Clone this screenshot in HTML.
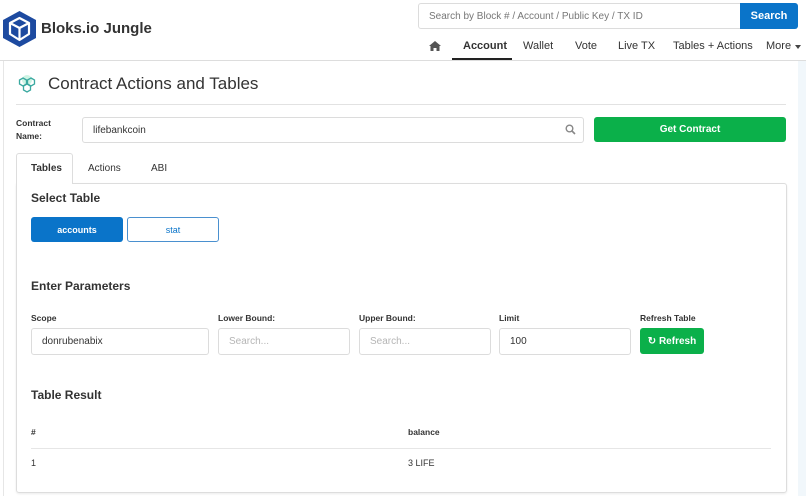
<!DOCTYPE html>
<html><head><meta charset="utf-8"><style>
*{box-sizing:border-box;margin:0;padding:0}
body{width:806px;height:496px;overflow:hidden;background:#fff;font-family:"Liberation Sans",sans-serif;color:#333;position:relative}
.a{position:absolute;white-space:nowrap}
.b{font-weight:bold}
.inp{position:absolute;border:1px solid #dcdcdc;border-radius:3px;background:#fff;font-size:10px;padding-left:10px;display:flex;align-items:center}
.ph{color:#b5b5b5}
.lbl{position:absolute;font-size:8.5px;font-weight:bold;color:#333}
.h{position:absolute;font-size:12px;font-weight:bold;color:#333}
.nav{position:absolute;top:40px;font-size:11px;color:#333}
</style></head><body>
<svg class="a" style="left:3px;top:11px" width="33" height="36" viewBox="0 0 33 36">
<polygon points="16.5,0 33,9 33,27 16.5,36 0,27 0,9" fill="#1d4aa0"/>
<g fill="none" stroke="#fff" stroke-width="2.2" stroke-linejoin="round">
<polygon points="16.5,7 26,12 16.5,17 7,12"/>
<polyline points="7,12 7,23 16.5,29 26,23 26,12"/>
<line x1="16.5" y1="17" x2="16.5" y2="29"/>
</g></svg>
<div class="a b" style="left:41px;top:20px;font-size:15px;color:#333">Bloks.io Jungle</div>
<div class="inp" style="left:418px;top:3px;width:324px;height:26px;border-radius:3px 0 0 3px;font-size:10px"><span style="color:#777">Search by Block # / Account / Public Key / TX ID</span></div>
<div class="a b" style="left:740px;top:3px;width:58px;height:26px;background:#0a74c9;color:#fff;font-size:11px;display:flex;align-items:center;justify-content:center;border-radius:0 3px 3px 0">Search</div>
<svg class="a" style="left:429px;top:41px" width="12" height="10" viewBox="0 0 12 10"><path d="M6 0 L12 5 L10.5 5 L10.5 10 L7.5 10 L7.5 7 L4.5 7 L4.5 10 L1.5 10 L1.5 5 L0 5 Z" fill="#555"/></svg>
<div class="nav b" style="left:463px">Account</div>
<div class="a" style="left:452px;top:58px;width:60px;height:2px;background:#222"></div>
<div class="nav" style="left:523px">Wallet</div>
<div class="nav" style="left:575px">Vote</div>
<div class="nav" style="left:618px">Live TX</div>
<div class="nav" style="left:673px">Tables + Actions</div>
<div class="nav" style="left:766px">More</div>
<div class="a" style="left:795px;top:45px;border-left:3px solid transparent;border-right:3px solid transparent;border-top:4px solid #444"></div>
<div class="a" style="left:0;top:60px;width:806px;height:1px;background:#ddd"></div>
<div class="a" style="left:3px;top:61px;width:1px;height:435px;background:#e6e6e6"></div>
<div class="a" style="left:798px;top:61px;width:8px;height:435px;background:#f1f7fb"></div>
<svg class="a" style="left:17px;top:75px" width="20" height="18" viewBox="0 0 20 18">
<circle cx="10" cy="5" r="5" fill="#b9f0d8" opacity=".7"/>
<g fill="none" stroke="#3aa9a0" stroke-width="1.3">
<polygon points="6,3 9.5,5 9.5,9 6,11 2.5,9 2.5,5"/>
<polygon points="14,3 17.5,5 17.5,9 14,11 10.5,9 10.5,5"/>
<polygon points="10,9 13.5,11 13.5,15 10,17 6.5,15 6.5,11"/>
</g></svg>
<div class="a" style="left:48px;top:74px;font-size:17px;color:#333">Contract Actions and Tables</div>
<div class="a" style="left:16px;top:104px;width:770px;height:1px;background:#e2e2e2"></div>
<div class="lbl" style="left:16px;top:117px;line-height:13px">Contract<br>Name:</div>
<div class="inp" style="left:82px;top:117px;width:502px;height:26px">lifebankcoin</div>
<svg class="a" style="left:565px;top:124px" width="11" height="11" viewBox="0 0 11 11"><circle cx="4.5" cy="4.5" r="3.3" fill="none" stroke="#888" stroke-width="1.4"/><line x1="7" y1="7" x2="10" y2="10" stroke="#888" stroke-width="1.6"/></svg>
<div class="a b" style="left:594px;top:117px;width:192px;height:25px;background:#0bb04a;color:#fff;font-size:10px;border-radius:3px;display:flex;align-items:center;justify-content:center">Get Contract</div>
<div class="a" style="left:16px;top:153px;width:57px;height:31px;border:1px solid #ddd;border-bottom:none;background:#fff;border-radius:3px 3px 0 0;z-index:2"></div>
<div class="a b" style="left:31px;top:163px;font-size:10px;z-index:3">Tables</div>
<div class="a" style="left:88px;top:163px;font-size:10px">Actions</div>
<div class="a" style="left:151px;top:163px;font-size:10px">ABI</div>
<div class="a" style="left:16px;top:183px;width:771px;height:310px;border:1px solid #ddd;border-radius:0 3px 3px 3px;box-shadow:0 1px 2px rgba(0,0,0,.08)"></div>
<div class="h" style="left:31px;top:191px">Select Table</div>
<div class="a b" style="left:31px;top:217px;width:92px;height:25px;background:#0a74c9;color:#fff;font-size:9px;border-radius:3px;display:flex;align-items:center;justify-content:center">accounts</div>
<div class="a" style="left:127px;top:217px;width:92px;height:25px;border:1px solid #4a90cf;color:#0a74c9;font-size:9px;border-radius:3px;display:flex;align-items:center;justify-content:center">stat</div>
<div class="h" style="left:31px;top:279px">Enter Parameters</div>
<div class="lbl" style="left:31px;top:313px">Scope</div>
<div class="lbl" style="left:218px;top:313px">Lower Bound:</div>
<div class="lbl" style="left:359px;top:313px">Upper Bound:</div>
<div class="lbl" style="left:499px;top:313px">Limit</div>
<div class="lbl" style="left:640px;top:313px">Refresh Table</div>
<div class="inp" style="left:31px;top:328px;width:178px;height:27px">donrubenabix</div>
<div class="inp" style="left:218px;top:328px;width:132px;height:27px"><span class="ph">Search...</span></div>
<div class="inp" style="left:359px;top:328px;width:132px;height:27px"><span class="ph">Search...</span></div>
<div class="inp" style="left:499px;top:328px;width:132px;height:27px">100</div>
<div class="a b" style="left:640px;top:328px;width:64px;height:26px;background:#0bb04a;color:#fff;font-size:10px;border-radius:3px;display:flex;align-items:center;justify-content:center">&#x21BB; Refresh</div>
<div class="h" style="left:31px;top:388px">Table Result</div>
<div class="lbl" style="left:31px;top:427px">#</div>
<div class="lbl" style="left:408px;top:427px">balance</div>
<div class="a" style="left:31px;top:448px;width:740px;height:1px;background:#e6e6e6"></div>
<div class="a" style="left:31px;top:458px;font-size:9px">1</div>
<div class="a" style="left:408px;top:458px;font-size:9px">3 LIFE</div>
</body></html>
